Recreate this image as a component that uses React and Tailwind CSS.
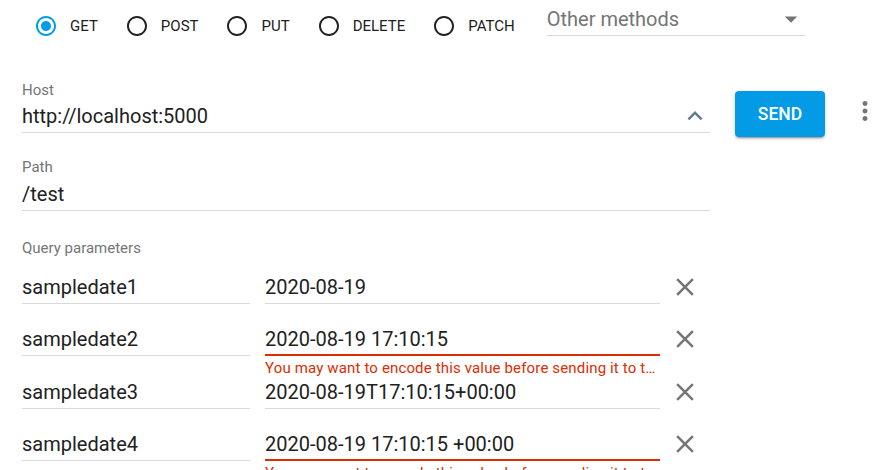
const methods = ['GET', 'POST', 'PUT', 'DELETE', 'PATCH'];

const params = [
  { name: 'sampledate1', value: '2020-08-19' },
  { name: 'sampledate2', value: '2020-08-19 17:10:15', warn: true },
  { name: 'sampledate3', value: '2020-08-19T17:10:15+00:00' },
  { name: 'sampledate4', value: '2020-08-19 17:10:15 +00:00', warn: true },
];

function Radio({ checked }) {
  return (
    <svg viewBox="0 0 24 24" className={checked ? 'w-6 h-6 fill-[#039be5]' : 'w-6 h-6 fill-[#212121]'}>
      {checked ? (
        <path d="M12 7c-2.76 0-5 2.24-5 5s2.24 5 5 5 5-2.24 5-5-2.24-5-5-5zm0-5C6.48 2 2 6.48 2 12s4.48 10 10 10 10-4.48 10-10S17.52 2 12 2zm0 18c-4.42 0-8-3.58-8-8s3.58-8 8-8 8 3.58 8 8-3.58 8-8 8z" />
      ) : (
        <path d="M12 2C6.48 2 2 6.48 2 12s4.48 10 10 10 10-4.48 10-10S17.52 2 12 2zm0 18c-4.42 0-8-3.58-8-8s3.58-8 8-8 8 3.58 8 8-3.58 8-8 8z" />
      )}
    </svg>
  );
}

function Icon({ d, className }) {
  return (
    <svg viewBox="0 0 24 24" className={'w-[30px] h-[30px] shrink-0 ' + className}>
      <path d={d} />
    </svg>
  );
}

const CLOSE = 'M19 6.41L17.59 5 12 10.59 6.41 5 5 6.41 10.59 12 5 17.59 6.41 19 12 13.41 17.59 19 19 17.59 13.41 12z';
const EXPAND_LESS = 'M12 8l-6 6 1.41 1.41L12 10.83l4.59 4.58L18 14z';
const DROP_DOWN = 'M7 10l5 5 5-5z';
const MORE_VERT = 'M12 8c1.1 0 2-.9 2-2s-.9-2-2-2-2 .9-2 2 .9 2 2 2zm0 2c-1.1 0-2 .9-2 2s.9 2 2 2 2-.9 2-2-.9-2-2-2zm0 6c-1.1 0-2 .9-2 2s.9 2 2 2 2-.9 2-2-.9-2-2-2z';

export default function App() {
  return (
    <div className="w-[886px] h-[470px] overflow-hidden bg-white font-['Roboto',sans-serif] text-[#212121]">
      {/* method picker */}
      <div className="flex items-start h-[38px] pt-[5px] pl-[34px]">
        <div className="flex items-center mt-[9px]">
          {methods.map((m, i) => (
            <div key={m} className="flex items-center gap-[12px] mr-[27px]">
              <Radio checked={i === 0} />
              <span className="text-[15px] leading-[18px]">{m}</span>
            </div>
          ))}
        </div>
        <div className="w-[258px] ml-[5px] pb-[2px] border-b border-[#d9d9d9] flex items-center justify-between h-[31px]">
          <span className="text-[20px] leading-[28px] text-[#757575]">Other methods</span>
          <Icon d={DROP_DOWN} className="fill-[#757575] -mr-px" />
        </div>
      </div>

      <div className="pl-[22px] mt-[43px]">
        {/* host */}
        <div className="flex items-start h-[52px]">
          <div className="w-[688px] pb-[2px] border-b border-[#d9d9d9]">
            <div className="text-[15px] leading-[18px] text-[#757575]">Host</div>
            <div className="mt-[3px] h-[28px] flex items-center justify-between">
              <span className="text-[20px] leading-[28px]">http://localhost:5000</span>
              <Icon d={EXPAND_LESS} className="fill-[#607d8b]" />
            </div>
          </div>
          <button className="ml-[25px] mt-[10px] w-[90px] h-[46px] shrink-0 rounded-[4px] bg-[#039be5] text-white text-[17.5px] font-medium shadow-[0_3px_1px_-2px_rgba(0,0,0,0.2),0_2px_2px_0_rgba(0,0,0,0.14),0_1px_5px_0_rgba(0,0,0,0.12)]">
            SEND
          </button>
          <div className="ml-[25px] mt-[15px]">
            <Icon d={MORE_VERT} className="fill-[#757575]" />
          </div>
        </div>

        {/* path */}
        <div className="w-[688px] mt-[25px] pb-[2px] border-b border-[#d9d9d9]">
          <div className="text-[15px] leading-[18px] text-[#757575]">Path</div>
          <div className="mt-[4px] text-[20px] leading-[28px]">/test</div>
        </div>

        {/* query */}
        <div className="mt-[28px] text-[15px] leading-[18px] text-[#757575]">Query parameters</div>
        <div className="mt-[16px]">
          {params.map((p) => (
            <div key={p.name} className="flex items-start h-[52.3px]">
              <div className="w-[228px] pb-[2px] border-b border-[#d9d9d9] text-[20px] leading-[28px]">{p.name}</div>
              <div className="w-[395px] ml-[15px]">
                <div
                  className={
                    p.warn
                      ? 'pb-[1px] border-b-2 border-[#dd2c00] text-[20px] leading-[28px]'
                      : 'pb-[2px] border-b border-[#d9d9d9] text-[20px] leading-[28px]'
                  }
                >
                  {p.value}
                </div>
                {p.warn && (
                  <div className="mt-[3px] text-[15px] leading-[18px] tracking-[0.15px] text-[#dd2c00] truncate">
                    You may want to encode this value before sending it to the server
                  </div>
                )}
              </div>
              <Icon d={CLOSE} className="ml-[10px] -mt-[1px] fill-[#757575]" />
            </div>
          ))}
        </div>
      </div>
    </div>
  );
}
